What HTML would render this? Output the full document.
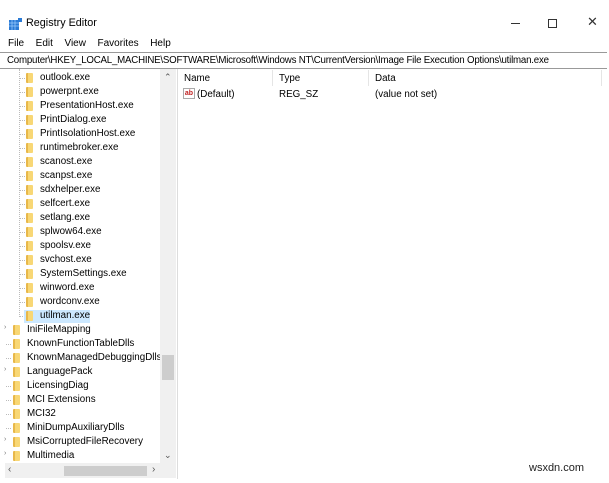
<!DOCTYPE html>
<html><head><style>
*{margin:0;padding:0;box-sizing:border-box}
body{width:609px;height:483px;background:#fff;font-family:"Liberation Sans",sans-serif;font-size:9.8px;color:#000;position:relative;overflow:hidden}
.a{position:absolute;white-space:nowrap}
.f{position:absolute;width:7px;height:10px;background:linear-gradient(90deg,#e8b84a 0 30%,#f8d775 30%);border-radius:1px}
.t{position:absolute;white-space:nowrap;line-height:14px}
</style></head><body>
<!-- title -->
<svg class="a" style="left:9px;top:18px" width="13" height="13"><rect x="0" y="2" width="10" height="10" fill="#2b7bd6"/><g stroke="#9fd0ff" stroke-width=".7"><line x1="0" y1="5" x2="10" y2="5"/><line x1="0" y1="8" x2="10" y2="8"/><line x1="3" y1="2" x2="3" y2="12"/><line x1="6" y1="2" x2="6" y2="12"/></g><rect x="9" y="0" width="4" height="4" fill="#2b7bd6"/></svg>
<div class="a" style="left:26px;top:17px;font-size:10.8px">Registry Editor</div>
<div class="a" style="left:511px;top:23px;width:9px;height:1px;background:#333"></div>
<div class="a" style="left:548px;top:19px;width:9px;height:9px;border:1px solid #333"></div>
<div class="a" style="left:587px;top:14px;font-size:13px;color:#333">✕</div>
<!-- menu -->
<div class="a" style="left:8px;top:38px;font-size:10px;word-spacing:3px">File&nbsp; Edit&nbsp; View&nbsp; Favorites&nbsp; Help</div>
<!-- address -->
<div class="a" style="left:0;top:52px;width:607px;height:17px;border-top:1px solid #999;border-bottom:1px solid #999;"></div>
<div class="a" style="left:7px;top:55px;font-size:9.7px;letter-spacing:-0.2px">Computer\HKEY_LOCAL_MACHINE\SOFTWARE\Microsoft\Windows NT\CurrentVersion\Image File Execution Options\utilman.exe</div>
<!-- tree lines -->
<div class="a" style="left:19px;top:69px;width:0;height:248px;border-left:1px dotted #bbb"></div>
<div id="tree"></div>
<!-- tree scrollbars -->
<div class="a" style="left:160px;top:69px;width:16px;height:394px;background:#f0f0f0"></div>
<div class="a" style="left:162px;top:355px;width:12px;height:25px;background:#cdcdcd"></div>
<div class="a" style="left:164px;top:72px;font-size:9px;color:#555">⌃</div>
<div class="a" style="left:164px;top:450px;font-size:9px;color:#555">⌄</div>
<div class="a" style="left:0;top:463px;width:176px;height:20px;background:#fff"></div>
<div class="a" style="left:5px;top:463px;width:171px;height:15px;background:#f0f0f0"></div>
<div class="a" style="left:64px;top:466px;width:83px;height:10px;background:#cdcdcd"></div>
<div class="a" style="left:8px;top:464px;font-size:10px;color:#555">‹</div>
<div class="a" style="left:152px;top:464px;font-size:10px;color:#555">›</div>
<div class="a" style="left:177px;top:69px;width:1px;height:410px;background:#ddd"></div>
<!-- right pane -->
<div class="a" style="left:184px;top:73px">Name</div>
<div class="a" style="left:272px;top:70px;width:1px;height:16px;background:#e5e5e5"></div>
<div class="a" style="left:279px;top:73px">Type</div>
<div class="a" style="left:368px;top:70px;width:1px;height:16px;background:#e5e5e5"></div>
<div class="a" style="left:375px;top:73px">Data</div>
<div class="a" style="left:601px;top:70px;width:1px;height:16px;background:#e5e5e5"></div>
<div class="a" style="left:183px;top:88px;width:12px;height:11px;border:1px solid #aaa;background:#fff;font-size:7px;color:#c02020;font-weight:bold;line-height:9px;text-align:center">ab</div>
<div class="a" style="left:197px;top:89px">(Default)</div>
<div class="a" style="left:279px;top:89px">REG_SZ</div>
<div class="a" style="left:375px;top:89px">(value not set)</div>
<div class="a" style="left:529px;top:462px;font-size:11px;color:#222">wsxdn.com</div>
<script>
var kids=["outlook.exe","powerpnt.exe","PresentationHost.exe","PrintDialog.exe","PrintIsolationHost.exe","runtimebroker.exe","scanost.exe","scanpst.exe","sdxhelper.exe","selfcert.exe","setlang.exe","splwow64.exe","spoolsv.exe","svchost.exe","SystemSettings.exe","winword.exe","wordconv.exe","utilman.exe"];
var par=[["IniFileMapping",1],["KnownFunctionTableDlls",0],["KnownManagedDebuggingDlls",0],["LanguagePack",1],["LicensingDiag",0],["MCI Extensions",0],["MCI32",0],["MiniDumpAuxiliaryDlls",0],["MsiCorruptedFileRecovery",1],["Multimedia",1],["NoAction",0]];
var h="",y=71;
kids.forEach(function(k,i){
 h+='<div class="a" style="left:20px;top:'+(y+7)+'px;width:5px;border-top:1px dotted #bbb"></div>';
 if(k=="utilman.exe")h+='<div class="a" style="left:24px;top:'+(y+1)+'px;width:66px;height:13px;background:#cce8ff"></div>';
 h+='<div class="f" style="left:26px;top:'+(y+2)+'px"></div><div class="t" style="left:40px;top:'+y+'px">'+k+'</div>';y+=14;});
par.forEach(function(p){
 h+=p[1]?'<div class="a" style="left:4px;top:'+(y+1)+'px;font-size:7px;color:#777">›</div>':'<div class="a" style="left:6px;top:'+(y+7)+'px;width:5px;border-top:1px dotted #bbb"></div>';
 h+='<div class="f" style="left:13px;top:'+(y+2)+'px"></div><div class="t" style="left:27px;top:'+y+'px">'+p[0]+'</div>';y+=14;});
document.getElementById("tree").innerHTML=h;
</script>
</body></html>
